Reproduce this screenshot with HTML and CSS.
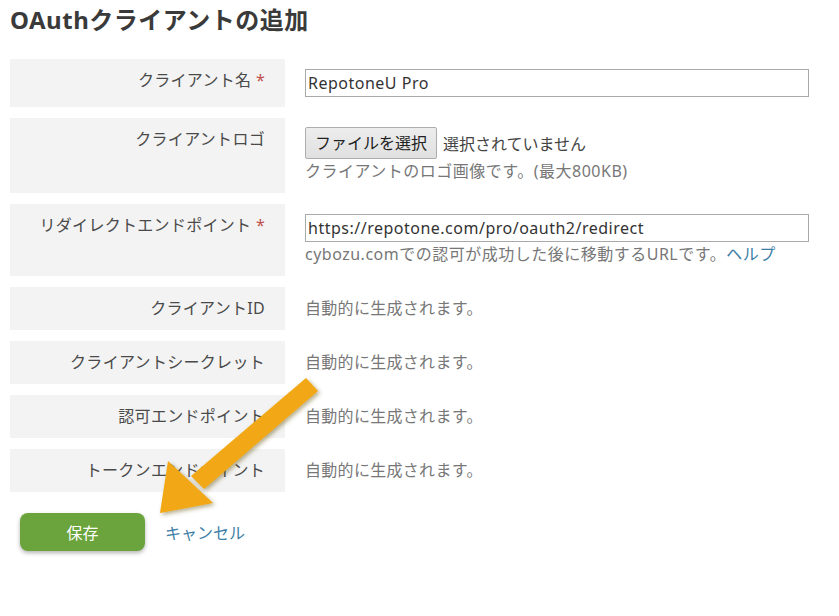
FILE: index.html
```html
<!DOCTYPE html>
<html lang="ja">
<head>
    <meta charset="UTF-8">
    <meta name="viewport" content="width=device-width, initial-scale=1.0">
    <title>OAuthクライアントの追加</title>
    <link rel="stylesheet" href="styles.css">
</head>
<body>
    <h1>OAuthクライアントの追加</h1>

    <form class="form">
        <div class="row">
            <div class="label">クライアント名 <span class="req">*</span></div>
            <div class="value">
                <input type="text" class="text-input" value="RepotoneU Pro">
            </div>
        </div>

        <div class="row">
            <div class="label">クライアントロゴ</div>
            <div class="value">
                <div class="file">
                    <span class="file-btn">ファイルを選択</span>
                    <span class="file-name">選択されていません</span>
                </div>
                <div class="hint">クライアントのロゴ画像です。(最大800KB)</div>
            </div>
        </div>

        <div class="row">
            <div class="label">リダイレクトエンドポイント <span class="req">*</span></div>
            <div class="value">
                <input type="text" class="text-input" value="https://repotone.com/pro/oauth2/redirect">
                <div class="hint">cybozu.comでの認可が成功した後に移動するURLです。<a href="#" class="link">ヘルプ</a></div>
            </div>
        </div>

        <div class="row">
            <div class="label">クライアントID</div>
            <div class="value auto">自動的に生成されます。</div>
        </div>

        <div class="row">
            <div class="label">クライアントシークレット</div>
            <div class="value auto">自動的に生成されます。</div>
        </div>

        <div class="row">
            <div class="label">認可エンドポイント</div>
            <div class="value auto">自動的に生成されます。</div>
        </div>

        <div class="row">
            <div class="label">トークンエンドポイント</div>
            <div class="value auto">自動的に生成されます。</div>
        </div>

        <div class="actions">
            <button type="button" class="save-btn">保存</button>
            <a href="#" class="link cancel">キャンセル</a>
        </div>
    </form>

    <!-- 注釈の矢印 -->
    <svg class="arrow" width="839" height="616" viewBox="0 0 839 616">
        <defs>
            <filter id="shadow" x="-20%" y="-20%" width="140%" height="140%">
                <feDropShadow dx="2" dy="2" stdDeviation="2" flood-color="#5a4a10" flood-opacity="0.45"/>
            </filter>
        </defs>
        <g filter="url(#shadow)" fill="#f2a712">
            <polygon points="306,378 318,391 204,489 191,476"/>
            <polygon points="160,513 168,461 213,503"/>
        </g>
    </svg>
</body>
</html>
```

FILE: styles.css
```css
body {
    margin: 0;
    padding: 4px 10px 10px;
    font-family: "Noto Sans", "Noto Sans CJK JP", sans-serif;
    font-size: 16px;
    color: #444;
    background: #fff;
    position: relative;
}
h1 {
    margin: 0 0 23px;
    font-size: 24px;
    line-height: 32px;
    font-weight: bold;
    color: #3a3a3a;
    letter-spacing: 0.5px;
}
.row {
    display: grid;
    grid-template-columns: 275px 1fr;
    column-gap: 20px;
    margin-bottom: 11px;
}
.label {
    background: #f3f3f3;
    text-align: right;
    padding: 12px 20px;
    line-height: 19px;
    color: #4a4a4a;
    letter-spacing: 0.3px;
}
.req {
    color: #c0504d;
}
.value {
    padding: 10px 20px 10px 0;
}
.value.auto {
    padding-top: 12px;
    line-height: 19px;
    color: #777;
    letter-spacing: 0.3px;
}
.text-input {
    display: block;
    box-sizing: border-box;
    width: 100%;
    height: 28px;
    margin: 0;
    padding: 0 2px;
    border: 1px solid #a9a9a9;
    font-family: inherit;
    font-size: 16px;
    letter-spacing: 0.5px;
    color: #333;
    outline: none;
}
.file {
    display: flex;
    align-items: center;
    gap: 6px;
    margin-top: -1px;
}
.file-btn {
    box-sizing: border-box;
    height: 32px;
    padding: 0 9px;
    line-height: 30px;
    border: 1px solid #adadad;
    border-radius: 2px;
    background: linear-gradient(#ededed, #e0e0e0);
    color: #222;
}
.file-name {
    color: #444;
}
.hint {
    line-height: 24px;
    color: #777;
    letter-spacing: 0.5px;
}
.link {
    color: #3d7ea6;
    text-decoration: none;
}
.actions {
    display: flex;
    align-items: center;
    gap: 20px;
    padding: 10px 10px 0;
}
.save-btn {
    width: 125px;
    height: 38px;
    border: none;
    border-radius: 8px;
    background: #6ba43c;
    color: #fff;
    font-family: inherit;
    font-size: 16px;
    box-shadow: 0 2px 4px rgba(0, 0, 0, 0.3);
    cursor: pointer;
}
.cancel {
    font-size: 16px;
}
.arrow {
    position: absolute;
    left: 0;
    top: 0;
    pointer-events: none;
}
```
